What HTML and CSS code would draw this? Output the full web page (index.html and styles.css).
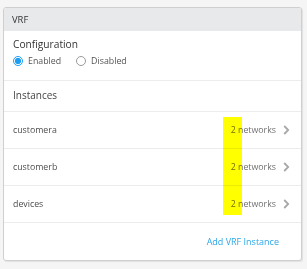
FILE: index.html
```html
<!DOCTYPE html>
<html lang="en">

<head>
    <meta charset="UTF-8">
    <meta name="viewport" content="width=device-width, initial-scale=1.0">
    <title>VRF</title>
    <link rel="stylesheet" href="styles.css">
</head>

<body>
    <div class="card">
        <div class="card-header">VRF</div>
        <div class="config">
            <div class="config-title">Configuration</div>
            <div class="radios">
                <label class="radio"><span class="dot checked"></span>Enabled</label>
                <label class="radio"><span class="dot"></span>Disabled</label>
            </div>
        </div>
        <div class="instances-title">Instances</div>
        <div class="row">
            <span class="name">customera</span>
            <span class="count">2 networks</span>
            <svg class="chev" width="7" height="10" viewBox="0 0 7 10"><path d="M1.2 1 L5.2 5 L1.2 9" fill="none" stroke="#a8a8a8" stroke-width="1.8"/></svg>
        </div>
        <div class="row">
            <span class="name">customerb</span>
            <span class="count">2 networks</span>
            <svg class="chev" width="7" height="10" viewBox="0 0 7 10"><path d="M1.2 1 L5.2 5 L1.2 9" fill="none" stroke="#a8a8a8" stroke-width="1.8"/></svg>
        </div>
        <div class="row">
            <span class="name">devices</span>
            <span class="count">2 networks</span>
            <svg class="chev" width="7" height="10" viewBox="0 0 7 10"><path d="M1.2 1 L5.2 5 L1.2 9" fill="none" stroke="#a8a8a8" stroke-width="1.8"/></svg>
        </div>
        <div class="footer">
            <a class="add-link" href="#">Add VRF Instance</a>
        </div>
        <div class="highlight"></div>
    </div>
</body>

</html>
```

FILE: styles.css
```css
body {
    margin: 0;
    padding: 7px 5px 8px 3px;
    background-color: #f5f5f6;
    font-family: "Open Sans", Arial, sans-serif;
}

.card {
    position: relative;
    width: 297px;
    height: 252px;
    background: #ffffff;
    border: 1px solid #cfcfd1;
    border-radius: 3px;
    box-shadow: 1px 1px 1px rgba(0, 0, 0, 0.08);
    overflow: hidden;
}

.card-header {
    height: 23px;
    line-height: 23px;
    padding-left: 8px;
    background: #e8e9eb;
    font-size: 9.4px;
    color: #333333;
}

.config {
    box-sizing: border-box;
    height: 50px;
    padding: 6px 9px 0 9px;
    border-bottom: 1px solid #ececec;
}

.config-title {
    font-size: 10.2px;
    color: #333333;
    line-height: 14px;
}

.radios {
    display: flex;
    gap: 15px;
    margin-top: 4px;
}

.radio {
    display: flex;
    align-items: center;
    gap: 5px;
    font-size: 8.8px;
    color: #555555;
    line-height: 12px;
}

.dot {
    box-sizing: border-box;
    width: 10px;
    height: 10px;
    border: 1px solid #9a9a9a;
    border-radius: 50%;
    background: #ffffff;
}

.dot.checked {
    border-color: #1e9ef0;
    background: radial-gradient(circle, #1e9ef0 0 2.8px, #ffffff 3.3px);
}

.instances-title {
    height: 30px;
    line-height: 28px;
    padding-left: 9px;
    font-size: 10px;
    color: #444444;
    border-bottom: 1px solid #ececec;
}

.row {
    display: flex;
    align-items: center;
    height: 36px;
    padding: 0 11px 0 9px;
    border-bottom: 1px solid #ececec;
    font-size: 8.8px;
}

.name {
    flex: 1;
    color: #4d4d4d;
}

.count {
    color: #707070;
}

.chev {
    margin-left: 7px;
}

.footer {
    display: flex;
    align-items: center;
    justify-content: flex-end;
    height: 36px;
    padding-right: 22px;
}

.add-link {
    font-size: 9px;
    color: #2ea7e8;
    text-decoration: none;
}

.highlight {
    position: absolute;
    left: 219px;
    top: 109px;
    width: 19px;
    height: 98px;
    background: #ffff00;
    mix-blend-mode: multiply;
}
```
